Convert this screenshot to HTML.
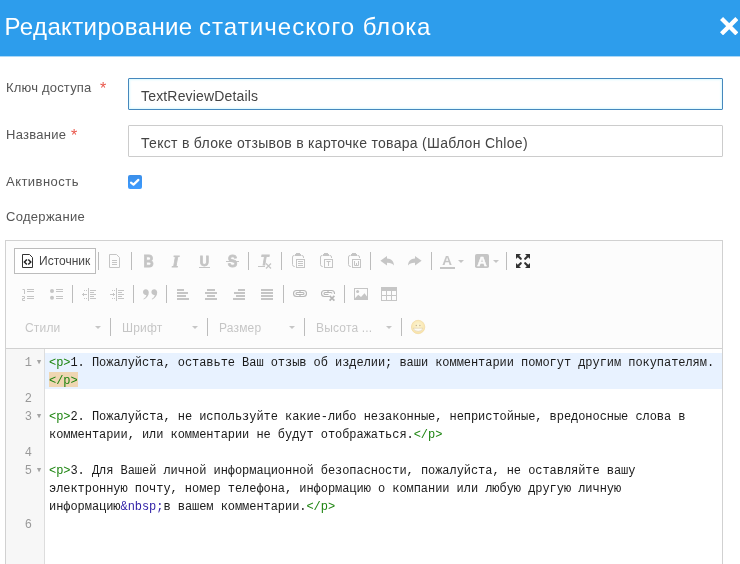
<!DOCTYPE html>
<html lang="ru">
<head>
<meta charset="utf-8">
<title>Редактирование статического блока</title>
<style>
*{box-sizing:border-box;margin:0;padding:0}
html,body{width:740px;height:564px;overflow:hidden;background:#fff}
body{font-family:"Liberation Sans",sans-serif;position:relative;color:#555}
.hdr{position:absolute;left:0;top:0;width:740px;height:56px;background:#2d9dec;box-shadow:0 1px 0 rgba(45,157,236,.4)}
.hdr h1{position:absolute;left:4.5px;letter-spacing:.656px;top:11px;font-weight:400;font-size:24px;line-height:32px;color:#fff;white-space:nowrap}
.close{position:absolute;left:719.7px;top:16.6px;width:18.4px;height:18.4px}
.lbl{position:absolute;left:6px;font-size:13px;line-height:18px;color:#555;white-space:nowrap}
.lbl b{color:#e9574b;font-weight:400}
.inp{position:absolute;left:128px;width:595px;height:32px;border:1px solid #ccc;background:#fff;font-size:14px;line-height:34px;padding-left:12px;overflow:hidden;color:#444;white-space:nowrap}
.inp{border-radius:1px}.inp.f{border-color:#4688bd;box-shadow:inset 0 0 2px 1px rgba(190,245,255,.55)}
.chk{position:absolute;left:128px;top:175px;width:14px;height:14px;border-radius:2px;background:linear-gradient(#3b8fe9,#3d9bff)}
/* editor */
.cke{position:absolute;left:5px;top:240px;width:718px;height:340px;border:1px solid #d1d1d1;background:#fff}
.top{position:absolute;left:0;top:0;width:716px;height:108px;background:#fcfcfc;border-bottom:1px solid #d1d1d1}
.sep{display:block;position:absolute;width:1px;height:18px;background:#bcbcbc}
.ic{position:absolute;width:16px;height:16px;overflow:visible}
.src{position:absolute;left:8px;top:7px;width:82px;height:26px;border:1px solid #bcbcbc;background:#fff}
.src span{position:absolute;left:24px;top:4px;font-size:12px;line-height:16px;color:#484848}
.combo{position:absolute;top:73.5px;letter-spacing:.18px;font-size:12px;line-height:26px;color:#484848;opacity:.3;white-space:nowrap}
.arr{display:block;position:absolute;width:0;height:0;border-left:3px solid transparent;border-right:3px solid transparent;border-top:3px solid #484848;opacity:.3}
/* codemirror */
.cm{position:absolute;left:0;top:108px;width:716px;height:240px;background:#fff;font-family:"Liberation Mono",monospace;font-size:12px;line-height:18px;color:#1a1a1a}
.gut{position:absolute;left:0;top:0;width:39px;height:240px;background:#f7f7f7;border-right:1px solid #ddd}
.ln{position:absolute;left:0;width:28px;text-align:right;padding-right:2px;margin-top:1px;color:#999;height:18px}
.fd{position:absolute;left:28px;width:10px;text-align:center;color:#a4a4a4;height:18px;font-size:11px;margin-top:0px}
.act{position:absolute;left:39px;top:4px;width:677px;height:36px;background:#e8f2ff}
.code{position:absolute;left:43px;margin-top:1px;white-space:pre;height:18px;letter-spacing:-0.05px}
.t{color:#1d8410}.a{color:#2e1ea6}
.mt{position:absolute;left:43px;top:23px;width:29px;height:15px;background:rgba(255,150,0,.3)}
#t1{letter-spacing:.19px}#t2{letter-spacing:.17px}#t3{letter-spacing:.28px}#t4{letter-spacing:.296px}#t5{letter-spacing:.46px}#t6{letter-spacing:.3px}
.lbl b{position:absolute;font-size:16px;line-height:16px;top:2px}
#wrap{position:absolute;left:0;top:0;width:740px;height:564px;will-change:transform;-webkit-font-smoothing:antialiased}
#w1,#w2,#w3{position:absolute;top:0}#w1{left:0;letter-spacing:.37px}#w2{left:194.5px;letter-spacing:1.05px}#w3{left:358.2px;letter-spacing:.75px}
</style>
</head>
<body>
<div id="wrap">
<div class="hdr"><h1><span id="t0"><span id="w1">Редактирование</span> <span id="w2">статического</span> <span id="w3">блока</span></span></h1>
<svg class="close" viewBox="0 0 18.4 18.4"><path d="M1.55 1.55L16.85 16.85M16.85 1.55L1.55 16.85" stroke="#fff" stroke-width="4.3" fill="none"/></svg>
</div>
<div class="lbl" style="top:79px"><span id="t1">Ключ доступа</span><b style="left:94px">*</b></div>
<div class="inp f" style="top:78px"><span id="t2">TextReviewDetails</span></div>
<div class="lbl" style="top:126px"><span id="t3">Название</span><b style="left:65px">*</b></div>
<div class="inp" style="top:125px"><span id="t4">Текст в блоке отзывов в карточке товара (Шаблон Chloe)</span></div>
<div class="lbl" style="top:173px"><span id="t5">Активность</span></div>
<div class="chk"><svg width="14" height="14" viewBox="0 0 14 14"><path d="M3 7.6L5.5 9.6L10.4 4.9" stroke="#fff" stroke-width="2.2" stroke-linecap="round" stroke-linejoin="round" fill="none"/></svg></div>
<div class="lbl" style="top:208px"><span id="t6">Содержание</span></div>

<div class="cke">
 <div class="top">
<div class="src"><span>Источник</span></div>
<svg class="ic" style="left:14px;top:12px;opacity:1" width="16" height="16" viewBox="0 0 16 16" ><path d="M2.5 1.5H9.5L12.5 4.5V14.5H2.5Z" fill="none" stroke="#333"/><path d="M6.9 6.4L4.4 9L6.9 11.6M8.3 6.4L10.8 9L8.3 11.6" fill="none" stroke="#222" stroke-width="1.5"/></svg>
<svg class="ic" style="left:101px;top:12px;opacity:0.3" width="16" height="16" viewBox="0 0 16 16" ><path d="M2.5 1.5H9.5L12.5 4.5V14.5H2.5Z" fill="none" stroke="#484848"/><path d="M5 7.5H10M5 9.5H10M5 11.5H10" stroke="#484848"/></svg>
<svg class="ic" style="left:134px;top:12px;opacity:0.3" width="16" height="16" viewBox="0 0 16 16" ><text x="10.238095238095237" y="14" font-family="Liberation Sans, sans-serif" font-size="16.8" font-weight="700"  fill="#484848" stroke="#484848" stroke-width="0.9" text-anchor="middle" transform="scale(0.84,1)">B</text></svg>
<svg class="ic" style="left:162px;top:12px;opacity:0.3" width="16" height="16" viewBox="0 0 16 16" ><text x="7.6" y="14" font-family="Liberation Serif, sans-serif" font-size="17" font-weight="700" font-style="italic" fill="#484848" stroke="#484848" stroke-width="0.8" text-anchor="middle" transform="scale(1,1)">I</text></svg>
<svg class="ic" style="left:190px;top:12px;opacity:0.3" width="16" height="16" viewBox="0 0 16 16" ><text x="9.882352941176471" y="12.8" font-family="Liberation Sans, sans-serif" font-size="15.2" font-weight="700"  fill="#484848" stroke="#484848" stroke-width="0.9" text-anchor="middle" transform="scale(0.85,1)">U</text><rect x="3" y="14" width="11" height="1" fill="#484848"/></svg>
<svg class="ic" style="left:218px;top:12px;opacity:0.3" width="16" height="16" viewBox="0 0 16 16" ><text x="9.772727272727272" y="14" font-family="Liberation Sans, sans-serif" font-size="16.4" font-weight="700"  fill="#484848" stroke="#484848" stroke-width="0.9" text-anchor="middle" transform="scale(0.88,1)">S</text><rect x="2" y="8" width="13" height="1" fill="#484848"/></svg>
<svg class="ic" style="left:251px;top:12px;opacity:0.3" width="16" height="16" viewBox="0 0 16 16" ><text x="8.444444444444445" y="12" font-family="Liberation Sans, sans-serif" font-size="14" font-weight="700" font-style="italic" fill="#484848" stroke="#484848" stroke-width="0.9" text-anchor="middle" transform="scale(0.9,1)">T</text><rect x="1" y="13" width="7" height="1" fill="#484848"/><path d="M9 10.5L14 15.5M14 10.5L9 15.5" stroke="#484848" stroke-width="1.2"/></svg>
<svg class="ic" style="left:284px;top:12px;opacity:0.3" width="16" height="16" viewBox="0 0 16 16" ><path d="M4.5 2.5H4Q2.5 2.5 2.5 4V11.5Q2.5 13.5 4.5 13.5H5M11.5 2.5H12Q13.5 2.5 13.5 4V5" fill="none" stroke="#484848"/><rect x="6" y="0" width="4" height="1" fill="#484848"/><rect x="5" y="1" width="6" height="2" fill="#484848"/><rect x="6.5" y="6.5" width="8" height="8" fill="none" stroke="#484848"/><path d="M8 8.5H13M8 10.5H13M8 12.5H13" stroke="#484848"/></svg>
<svg class="ic" style="left:312px;top:12px;opacity:0.3" width="16" height="16" viewBox="0 0 16 16" ><path d="M4.5 2.5H4Q2.5 2.5 2.5 4V11.5Q2.5 13.5 4.5 13.5H5M11.5 2.5H12Q13.5 2.5 13.5 4V5" fill="none" stroke="#484848"/><rect x="6" y="0" width="4" height="1" fill="#484848"/><rect x="5" y="1" width="6" height="2" fill="#484848"/><rect x="6.5" y="6.5" width="8" height="8" fill="none" stroke="#484848"/><path d="M8.5 8.5H12.5M10.5 8.5V13" stroke="#484848" fill="none"/></svg>
<svg class="ic" style="left:340px;top:12px;opacity:0.3" width="16" height="16" viewBox="0 0 16 16" ><path d="M4.5 2.5H4Q2.5 2.5 2.5 4V11.5Q2.5 13.5 4.5 13.5H5M11.5 2.5H12Q13.5 2.5 13.5 4V5" fill="none" stroke="#484848"/><rect x="6" y="0" width="4" height="1" fill="#484848"/><rect x="5" y="1" width="6" height="2" fill="#484848"/><rect x="6.5" y="6.5" width="8" height="8" fill="none" stroke="#484848"/><path d="M8.5 8V12.5H12.5V8M10.5 10V12.5" stroke="#484848" fill="none"/></svg>
<svg class="ic" style="left:373px;top:12px;opacity:0.3" width="16" height="16" viewBox="0 0 16 16" ><path d="M1.4 7.7L8 3V5.6C12.5 5.8 14.8 8.6 15 12.6C13.4 10.4 11.4 9.7 8 9.8V12.6Z" fill="#484848"/></svg>
<svg class="ic" style="left:401px;top:12px;opacity:0.3" width="16" height="16" viewBox="0 0 16 16" ><path d="M14.6 7.7L8 3V5.6C3.5 5.8 1.2 8.6 1 12.6C2.6 10.4 4.6 9.7 8 9.8V12.6Z" fill="#484848"/></svg>
<svg class="ic" style="left:434px;top:12px;opacity:0.3" width="16" height="16" viewBox="0 0 16 16" ><text x="7.2" y="11.7" font-family="Liberation Sans, sans-serif" font-size="13.4" font-weight="700"  fill="#484848" stroke="#484848" stroke-width="0.1" text-anchor="middle" transform="scale(1,1)">A</text><rect x="0" y="14" width="15" height="2" fill="#484848"/></svg>
<svg class="ic" style="left:469px;top:12px;opacity:0.3" width="16" height="16" viewBox="0 0 16 16" ><rect x="0" y="1" width="14" height="14" rx="1.8" fill="#484848"/><text x="7.1" y="12.6" font-family="Liberation Sans, sans-serif" font-size="13.2" font-weight="700"  fill="#fff" stroke="#fff" stroke-width="0.5" text-anchor="middle" transform="scale(1,1)">A</text></svg>
<svg class="ic" style="left:509px;top:12px;opacity:1" width="16" height="16" viewBox="0 0 16 16" ><g transform="translate(8 8) scale(1 1)"><path d="M-7 -7H-2L-7 -2Z" fill="#333"/><path d="M-5.3 -5.3L-2.2 -2.2" stroke="#333" stroke-width="2.1" stroke-linecap="round"/></g><g transform="translate(8 8) scale(-1 1)"><path d="M-7 -7H-2L-7 -2Z" fill="#333"/><path d="M-5.3 -5.3L-2.2 -2.2" stroke="#333" stroke-width="2.1" stroke-linecap="round"/></g><g transform="translate(8 8) scale(1 -1)"><path d="M-7 -7H-2L-7 -2Z" fill="#333"/><path d="M-5.3 -5.3L-2.2 -2.2" stroke="#333" stroke-width="2.1" stroke-linecap="round"/></g><g transform="translate(8 8) scale(-1 -1)"><path d="M-7 -7H-2L-7 -2Z" fill="#333"/><path d="M-5.3 -5.3L-2.2 -2.2" stroke="#333" stroke-width="2.1" stroke-linecap="round"/></g></svg>
<i class="sep" style="left:92px;top:11px"></i>
<i class="sep" style="left:125px;top:11px"></i>
<i class="sep" style="left:242px;top:11px"></i>
<i class="sep" style="left:275px;top:11px"></i>
<i class="sep" style="left:364px;top:11px"></i>
<i class="sep" style="left:425px;top:11px"></i>
<i class="sep" style="left:500px;top:11px"></i>
<i class="arr" style="left:452px;top:19px"></i>
<i class="arr" style="left:487px;top:19px"></i>
<svg class="ic" style="left:14px;top:45px;opacity:0.3" width="16" height="16" viewBox="0 0 16 16" ><rect x="7" y="3" width="7" height="1" fill="#484848"/><rect x="7" y="5" width="7" height="1" fill="#484848"/><rect x="7" y="10" width="7" height="1" fill="#484848"/><rect x="7" y="12" width="7" height="1" fill="#484848"/><path d="M2.5 3.5H4.5V8M2 10.5H4.5V12.5H2.5V14.5H5" fill="none" stroke="#484848"/></svg>
<svg class="ic" style="left:42px;top:45px;opacity:0.3" width="16" height="16" viewBox="0 0 16 16" ><rect x="8" y="3" width="7" height="1" fill="#484848"/><rect x="8" y="5" width="7" height="1" fill="#484848"/><rect x="8" y="10" width="7" height="1" fill="#484848"/><rect x="8" y="12" width="7" height="1" fill="#484848"/><circle cx="4" cy="5" r="2" fill="#484848"/><circle cx="4" cy="11.8" r="2" fill="#484848"/></svg>
<svg class="ic" style="left:75px;top:45px;opacity:0.3" width="16" height="16" viewBox="0 0 16 16" ><rect x="9" y="4" width="6" height="1" fill="#484848"/><rect x="9" y="8" width="6" height="1" fill="#484848"/><rect x="9" y="12" width="6" height="1" fill="#484848"/><rect x="9" y="6" width="4" height="1" fill="#484848"/><rect x="9" y="10" width="4" height="1" fill="#484848"/><rect x="7" y="2" width="1" height="13" fill="#484848"/><rect x="3" y="4" width="1" height="1" fill="#484848"/><rect x="3" y="12" width="1" height="1" fill="#484848"/><rect x="5" y="4" width="1" height="1" fill="#484848"/><rect x="5" y="12" width="1" height="1" fill="#484848"/><path d="M1 8.5H6M2.5 7V10" fill="none" stroke="#484848"/></svg>
<svg class="ic" style="left:103px;top:45px;opacity:0.3" width="16" height="16" viewBox="0 0 16 16" ><rect x="9" y="4" width="6" height="1" fill="#484848"/><rect x="9" y="8" width="6" height="1" fill="#484848"/><rect x="9" y="12" width="6" height="1" fill="#484848"/><rect x="9" y="6" width="4" height="1" fill="#484848"/><rect x="9" y="10" width="4" height="1" fill="#484848"/><rect x="7" y="2" width="1" height="13" fill="#484848"/><rect x="3" y="4" width="1" height="1" fill="#484848"/><rect x="3" y="12" width="1" height="1" fill="#484848"/><rect x="5" y="4" width="1" height="1" fill="#484848"/><rect x="5" y="12" width="1" height="1" fill="#484848"/><path d="M1 8.5H6M4.5 7V10" fill="none" stroke="#484848"/></svg>
<svg class="ic" style="left:136px;top:45px;opacity:0.3" width="16" height="16" viewBox="0 0 16 16" ><path transform="translate(0.2 0)" d="M3.6 3.2C5.4 3.2 6.6 4.5 6.6 6.6C6.6 9.6 4.6 12.2 1.6 13.6L1.1 12.9C3 11.8 4 10.4 4.2 8.9C2.2 9.2 0.8 7.9 0.8 6.1C0.8 4.4 2 3.2 3.6 3.2Z" fill="#484848"/><path transform="translate(8.6 0)" d="M3.6 3.2C5.4 3.2 6.6 4.5 6.6 6.6C6.6 9.6 4.6 12.2 1.6 13.6L1.1 12.9C3 11.8 4 10.4 4.2 8.9C2.2 9.2 0.8 7.9 0.8 6.1C0.8 4.4 2 3.2 3.6 3.2Z" fill="#484848"/></svg>
<svg class="ic" style="left:169px;top:45px;opacity:0.3" width="16" height="16" viewBox="0 0 16 16" ><rect x="2" y="3" width="7" height="2" fill="#484848"/><rect x="2" y="6" width="11" height="2" fill="#484848"/><rect x="2" y="9" width="9" height="2" fill="#484848"/><rect x="2" y="12" width="12" height="2" fill="#484848"/></svg>
<svg class="ic" style="left:197px;top:45px;opacity:0.3" width="16" height="16" viewBox="0 0 16 16" ><rect x="4" y="3" width="8" height="2" fill="#484848"/><rect x="2" y="6" width="12" height="2" fill="#484848"/><rect x="4" y="9" width="8" height="2" fill="#484848"/><rect x="2" y="12" width="12" height="2" fill="#484848"/></svg>
<svg class="ic" style="left:225px;top:45px;opacity:0.3" width="16" height="16" viewBox="0 0 16 16" ><rect x="7" y="3" width="7" height="2" fill="#484848"/><rect x="3" y="6" width="11" height="2" fill="#484848"/><rect x="5" y="9" width="9" height="2" fill="#484848"/><rect x="2" y="12" width="12" height="2" fill="#484848"/></svg>
<svg class="ic" style="left:253px;top:45px;opacity:0.3" width="16" height="16" viewBox="0 0 16 16" ><rect x="2" y="3" width="12" height="2" fill="#484848"/><rect x="2" y="6" width="12" height="2" fill="#484848"/><rect x="2" y="9" width="12" height="2" fill="#484848"/><rect x="2" y="12" width="12" height="2" fill="#484848"/></svg>
<svg class="ic" style="left:286px;top:45px;opacity:0.38" width="16" height="16" viewBox="0 0 16 16" ><rect x="1.5" y="4.5" width="13" height="6" rx="3" fill="none" stroke="#484848" stroke-width="1.1"/><rect x="4" y="6.5" width="8" height="2" rx="1" fill="none" stroke="#484848" stroke-width="1.05"/><path d="M8 4.5V6.5M8 8.5V10.5" stroke="#484848" stroke-width="1.1"/></svg>
<svg class="ic" style="left:314px;top:45px;opacity:0.38" width="16" height="16" viewBox="0 0 16 16" ><path d="M9.5 10.5H4.5Q1.5 10.5 1.5 7.5Q1.5 4.5 4.5 4.5H11.5Q14.5 4.5 14.5 7.5V8" fill="none" stroke="#484848" stroke-width="1.1"/><path d="M8.5 8.5H5Q4 8.5 4 7.5Q4 6.5 5 6.5H11Q12 6.5 12 7.5" fill="none" stroke="#484848" stroke-width="1.05"/><path d="M8 4.5V6.5" stroke="#484848" stroke-width="1.1"/><path d="M9.6 9.8L14.4 14.6M14.4 9.8L9.6 14.6" stroke="#484848" stroke-width="1.7"/></svg>
<svg class="ic" style="left:347px;top:45px;opacity:0.3" width="16" height="16" viewBox="0 0 16 16" ><rect x="1.5" y="2.5" width="13" height="11" fill="none" stroke="#484848"/><circle cx="4.6" cy="5.6" r="1.5" fill="#484848"/><path d="M2 13V12.2L5.2 8.8L8 11L11.5 7.2L14 10.4V13Z" fill="#484848"/></svg>
<svg class="ic" style="left:375px;top:45px;opacity:1" width="16" height="16" viewBox="0 0 16 16"><rect x="0" y="1" width="16" height="14" fill="#484848" opacity=".3"/><rect x="1" y="5" width="4" height="4" fill="#fcfcfc"/><rect x="1" y="10" width="4" height="4" fill="#fcfcfc"/><rect x="6" y="5" width="4" height="4" fill="#fcfcfc"/><rect x="6" y="10" width="4" height="4" fill="#fcfcfc"/><rect x="11" y="5" width="4" height="4" fill="#fcfcfc"/><rect x="11" y="10" width="4" height="4" fill="#fcfcfc"/></svg>
<i class="sep" style="left:66px;top:44px"></i>
<i class="sep" style="left:127px;top:44px"></i>
<i class="sep" style="left:160px;top:44px"></i>
<i class="sep" style="left:277px;top:44px"></i>
<i class="sep" style="left:338px;top:44px"></i>
<div class="combo" style="left:19px">Стили</div>
<i class="arr" style="left:89px;top:85px"></i>
<i class="sep" style="left:104px;top:77px"></i>
<div class="combo" style="left:116px">Шрифт</div>
<i class="arr" style="left:186px;top:85px"></i>
<i class="sep" style="left:201px;top:77px"></i>
<div class="combo" style="left:213px">Размер</div>
<i class="arr" style="left:283px;top:85px"></i>
<i class="sep" style="left:298px;top:77px"></i>
<div class="combo" style="left:310px">Высота ...</div>
<i class="arr" style="left:380px;top:85px"></i>
<i class="sep" style="left:395px;top:77px"></i>
<svg class="ic" style="left:404px;top:78px;opacity:0.42" width="16" height="16" viewBox="0 0 16 16" ><defs><radialGradient id="sg" cx=".5" cy=".4" r=".6"><stop offset="0" stop-color="#fdeea0"/><stop offset="1" stop-color="#f6c235"/></radialGradient></defs><circle cx="8.1" cy="8" r="6.7" fill="url(#sg)" stroke="#e3aa2a" stroke-width=".7"/><path d="M3.4 9.2H12.8Q12.3 12.4 8.1 12.4Q3.9 12.4 3.4 9.2Z" fill="#fffbe8" stroke="#9a6a20" stroke-width=".45"/><circle cx="6.3" cy="6.5" r=".75" fill="#7a5010"/><circle cx="9.9" cy="6.5" r=".75" fill="#7a5010"/></svg>
 </div>
 <div class="cm">
  <div class="gut"></div>
  <div class="act"></div><div class="mt"></div>
  <div class="ln" style="top:4px">1</div><div class="fd" style="top:4px">▾</div>
  <div class="ln" style="top:40px">2</div>
  <div class="ln" style="top:58px">3</div><div class="fd" style="top:58px">▾</div>
  <div class="ln" style="top:94px">4</div>
  <div class="ln" style="top:112px">5</div><div class="fd" style="top:112px">▾</div>
  <div class="ln" style="top:166px">6</div>
  <div class="code" style="top:4px"><span class="t">&lt;p&gt;</span>1. Пожалуйста, оставьте Ваш отзыв об изделии; ваши комментарии помогут другим покупателям.</div>
  <div class="code" style="top:22px"><span class="t">&lt;/p&gt;</span></div>
  <div class="code" style="top:58px"><span class="t">&lt;p&gt;</span>2. Пожалуйста, не используйте какие-либо незаконные, непристойные, вредоносные слова в</div>
  <div class="code" style="top:76px">комментарии, или комментарии не будут отображаться.<span class="t">&lt;/p&gt;</span></div>
  <div class="code" style="top:112px"><span class="t">&lt;p&gt;</span>3. Для Вашей личной информационной безопасности, пожалуйста, не оставляйте вашу</div>
  <div class="code" style="top:130px">электронную почту, номер телефона, информацию о компании или любую другую личную</div>
  <div class="code" style="top:148px">информацию<span class="a">&amp;nbsp;</span>в вашем комментарии.<span class="t">&lt;/p&gt;</span></div>
 </div>
</div>
</div>
</body>
</html>
